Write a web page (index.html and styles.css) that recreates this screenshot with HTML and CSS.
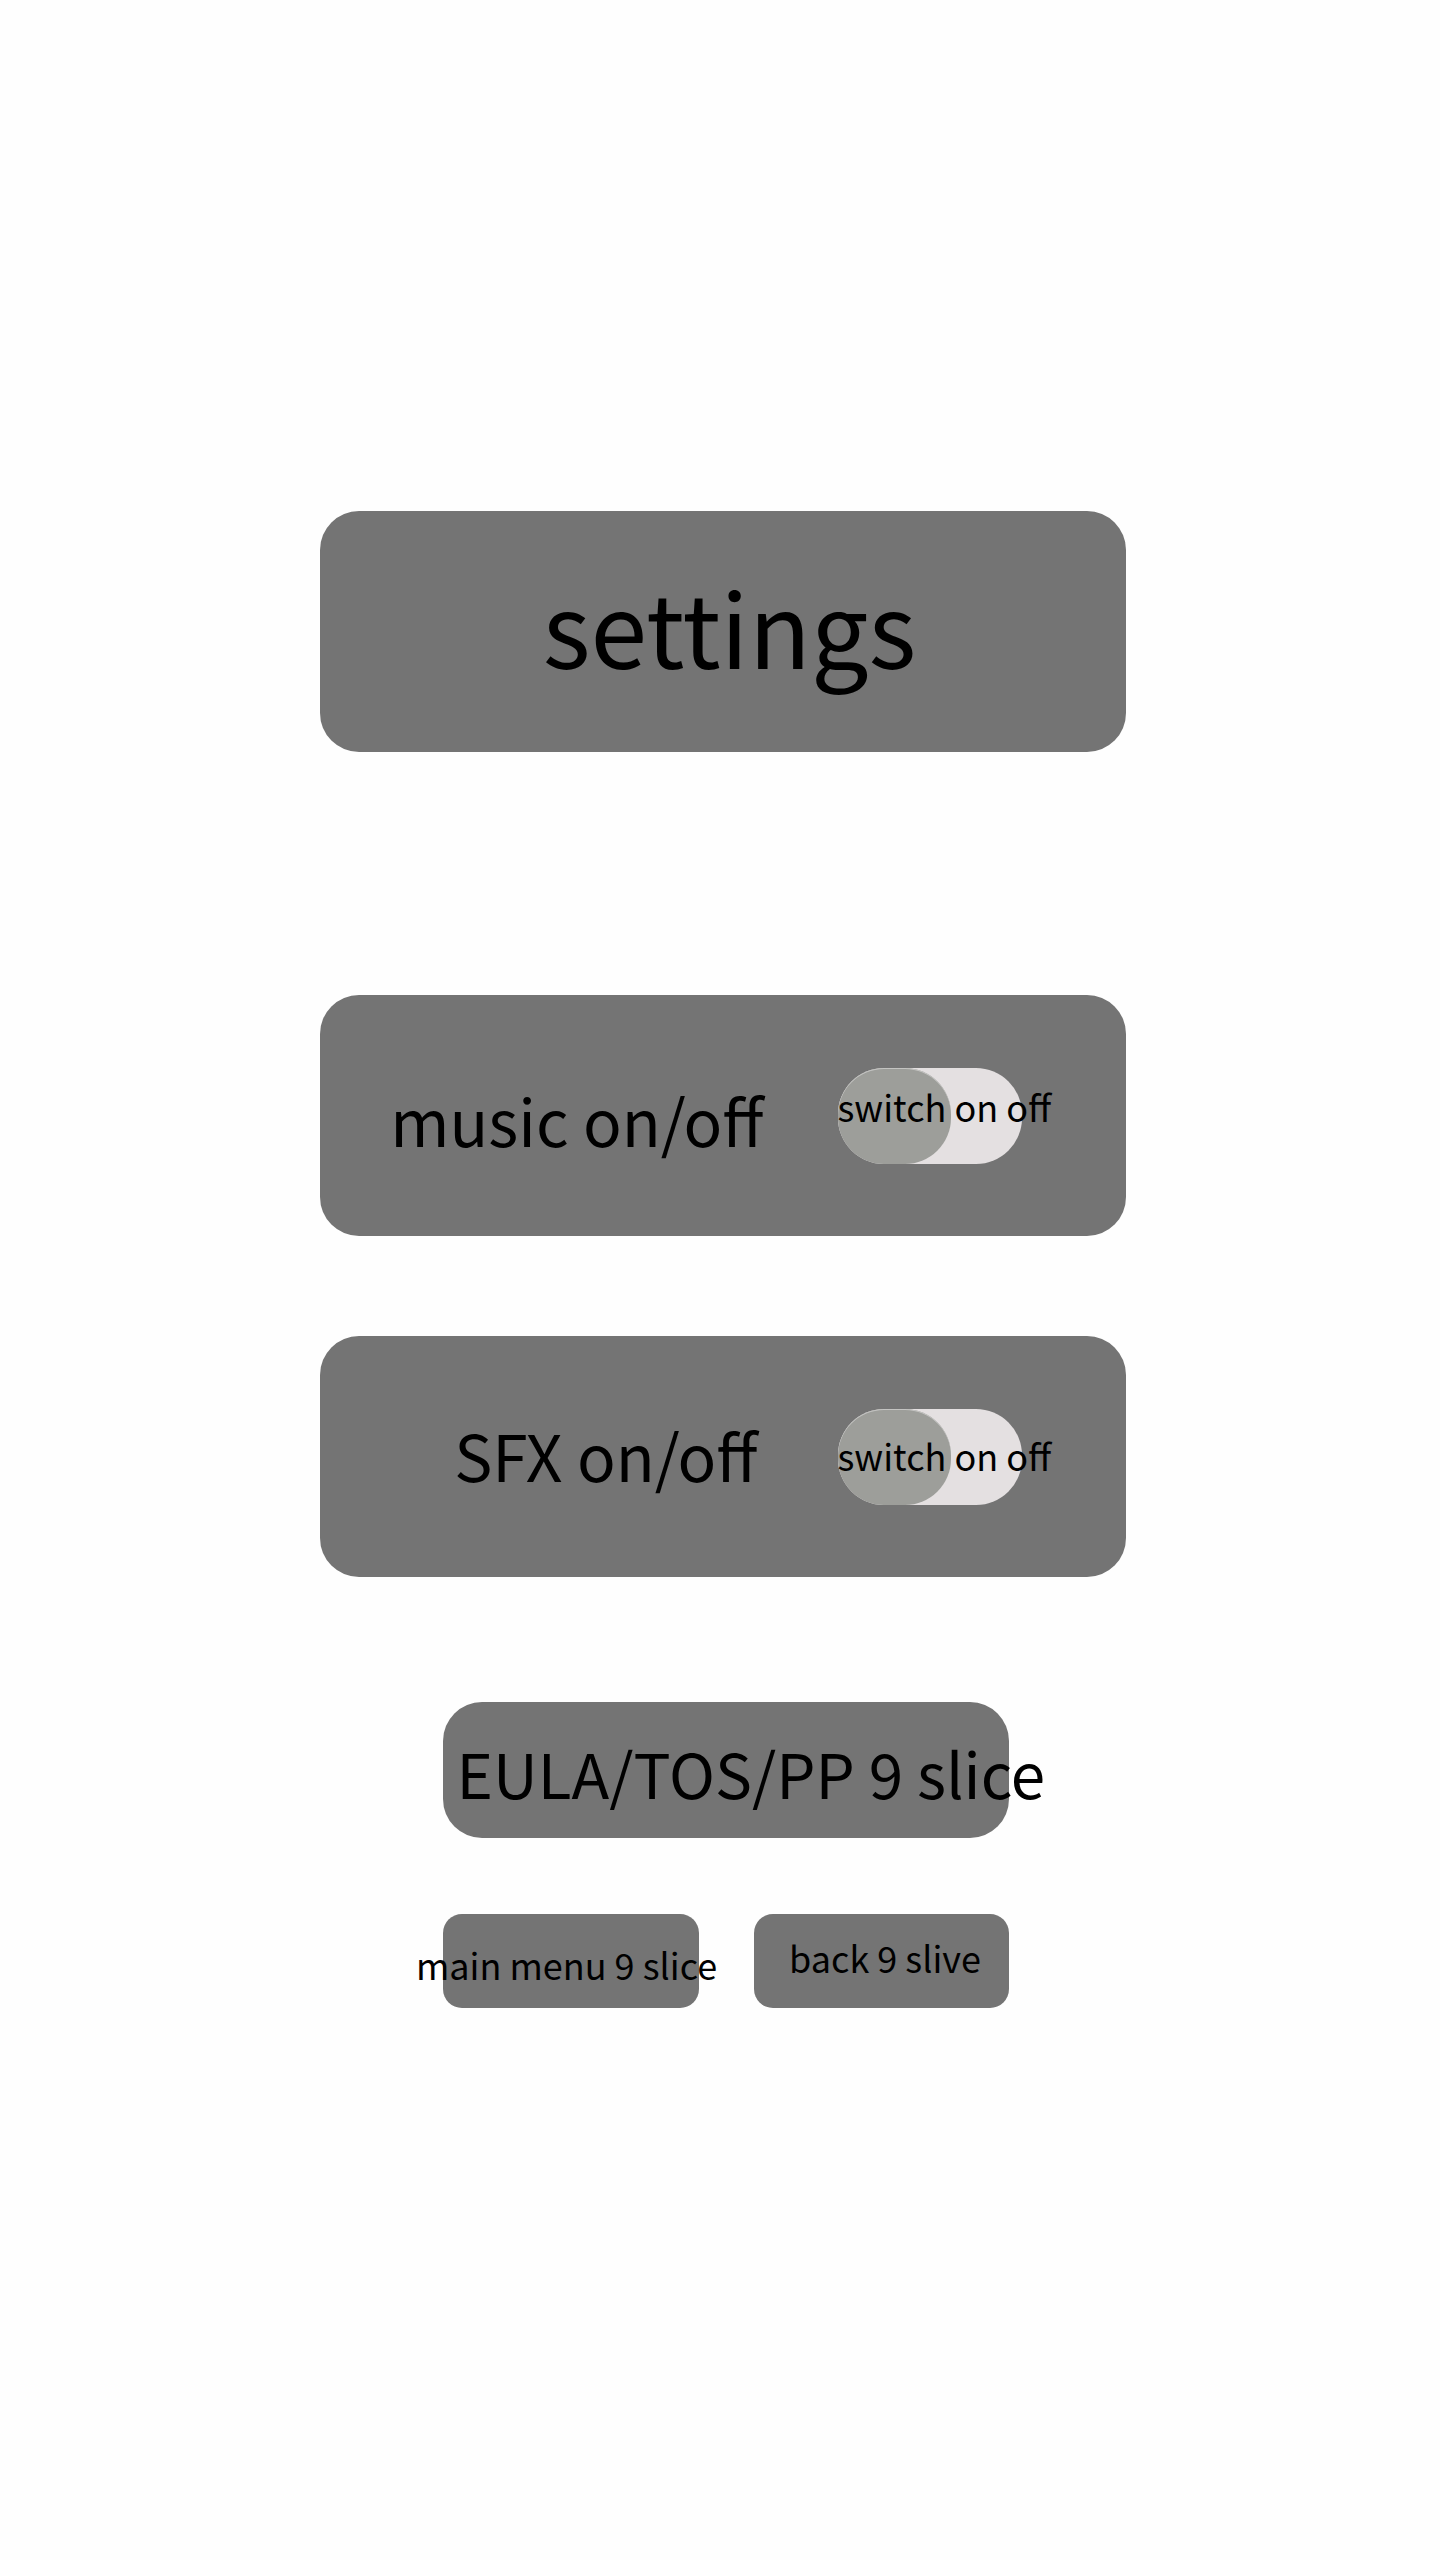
FILE: index.html
```html
<!DOCTYPE html>
<html lang="en">
<head>
<meta charset="utf-8">
<meta name="viewport" content="width=device-width, initial-scale=1">
<title>settings</title>
<link rel="stylesheet" href="styles.css">
</head>
<body>
<main class="screen">
  <h1 class="panel title">settings</h1>
  <form class="options">
    <div class="panel option option-music">
      <label class="name" for="music">music on/off</label>
      <div class="switch">
        <input class="toggle" type="checkbox" id="music">
        <label class="caption" for="music">switch on off</label>
      </div>
    </div>
    <div class="panel option option-sfx">
      <label class="name" for="sfx">SFX on/off</label>
      <div class="switch">
        <input class="toggle" type="checkbox" id="sfx">
        <label class="caption" for="sfx">switch on off</label>
      </div>
    </div>
  </form>
  <nav class="actions">
    <button class="button legal" type="button">EULA/TOS/PP 9 slice</button>
    <button class="button small menu" type="button">main menu 9 slice</button>
    <button class="button small back" type="button">back 9 slive</button>
  </nav>
</main>
</body>
</html>
```
FILE: styles.css
```css
* {
  box-sizing: border-box;
}

body {
  margin: 0;
  background: #fefefe;
  color: #000;
  font-family: "Noto Sans CJK SC", "Noto Sans", sans-serif;
  font-size: 64px;
  line-height: 1;
}

.screen {
  display: flex;
  flex-direction: column;
  align-items: center;
  min-height: 100vh;
  padding: 511px 0 0 5px;
}

.panel {
  display: flex;
  align-items: center;
  width: 100%;
  max-width: 806px;
  min-height: 241px;
  margin: 0;
  border-radius: 39px;
  background: #747474;
  white-space: nowrap;
}

.title {
  justify-content: center;
  padding: 0 0 14px 14px;
  font-size: 102px;
  font-weight: 400;
}

.options {
  display: flex;
  flex-direction: column;
  align-items: center;
  gap: 100px;
  width: 100%;
  margin-top: 243px;
}

.option {
  justify-content: flex-end;
  gap: 74px;
  padding-right: 104px;
}

.option-music .name {
  padding-top: 6px;
}

.option-sfx {
  gap: 80px;
}

.option-sfx .name {
  padding-bottom: 6px;
}

.switch {
  position: relative;
  width: 184px;
  height: 96px;
}

.toggle {
  appearance: none;
  display: block;
  width: 184px;
  height: 96px;
  margin: 0;
  border-radius: 46px;
  background: #e4e0e1;
  cursor: pointer;
}

.toggle::before {
  content: "";
  display: block;
  width: 113px;
  height: 96px;
  border-radius: 46px;
  background: #9d9e9a;
  box-shadow: inset 0 1px #c4c4c2;
}

.toggle:checked::before {
  margin-left: auto;
}

.caption {
  position: absolute;
  left: 0;
  top: 26px;
  font-size: 36px;
  line-height: 40px;
}

.option-music .caption {
  top: 18px;
}

.actions {
  display: grid;
  grid-template-columns: 256px 255px;
  gap: 76px 55px;
  margin-top: 125px;
  padding-left: 6px;
}

.button {
  display: flex;
  align-items: center;
  justify-content: center;
  min-width: 0;
  padding: 0;
  border: 0;
  background: #747474;
  color: inherit;
  font: inherit;
  white-space: nowrap;
  cursor: pointer;
}

.legal {
  grid-column: 1 / -1;
  justify-content: flex-start;
  min-height: 136px;
  padding: 4px 0 0 14px;
  border-radius: 39px;
  font-size: 62px;
}

.small {
  min-height: 94px;
  border-radius: 19px;
  font-size: 36px;
}

.menu {
  padding: 6px 8px 0 0;
}

.back {
  padding: 0 0 8px 8px;
}
```
